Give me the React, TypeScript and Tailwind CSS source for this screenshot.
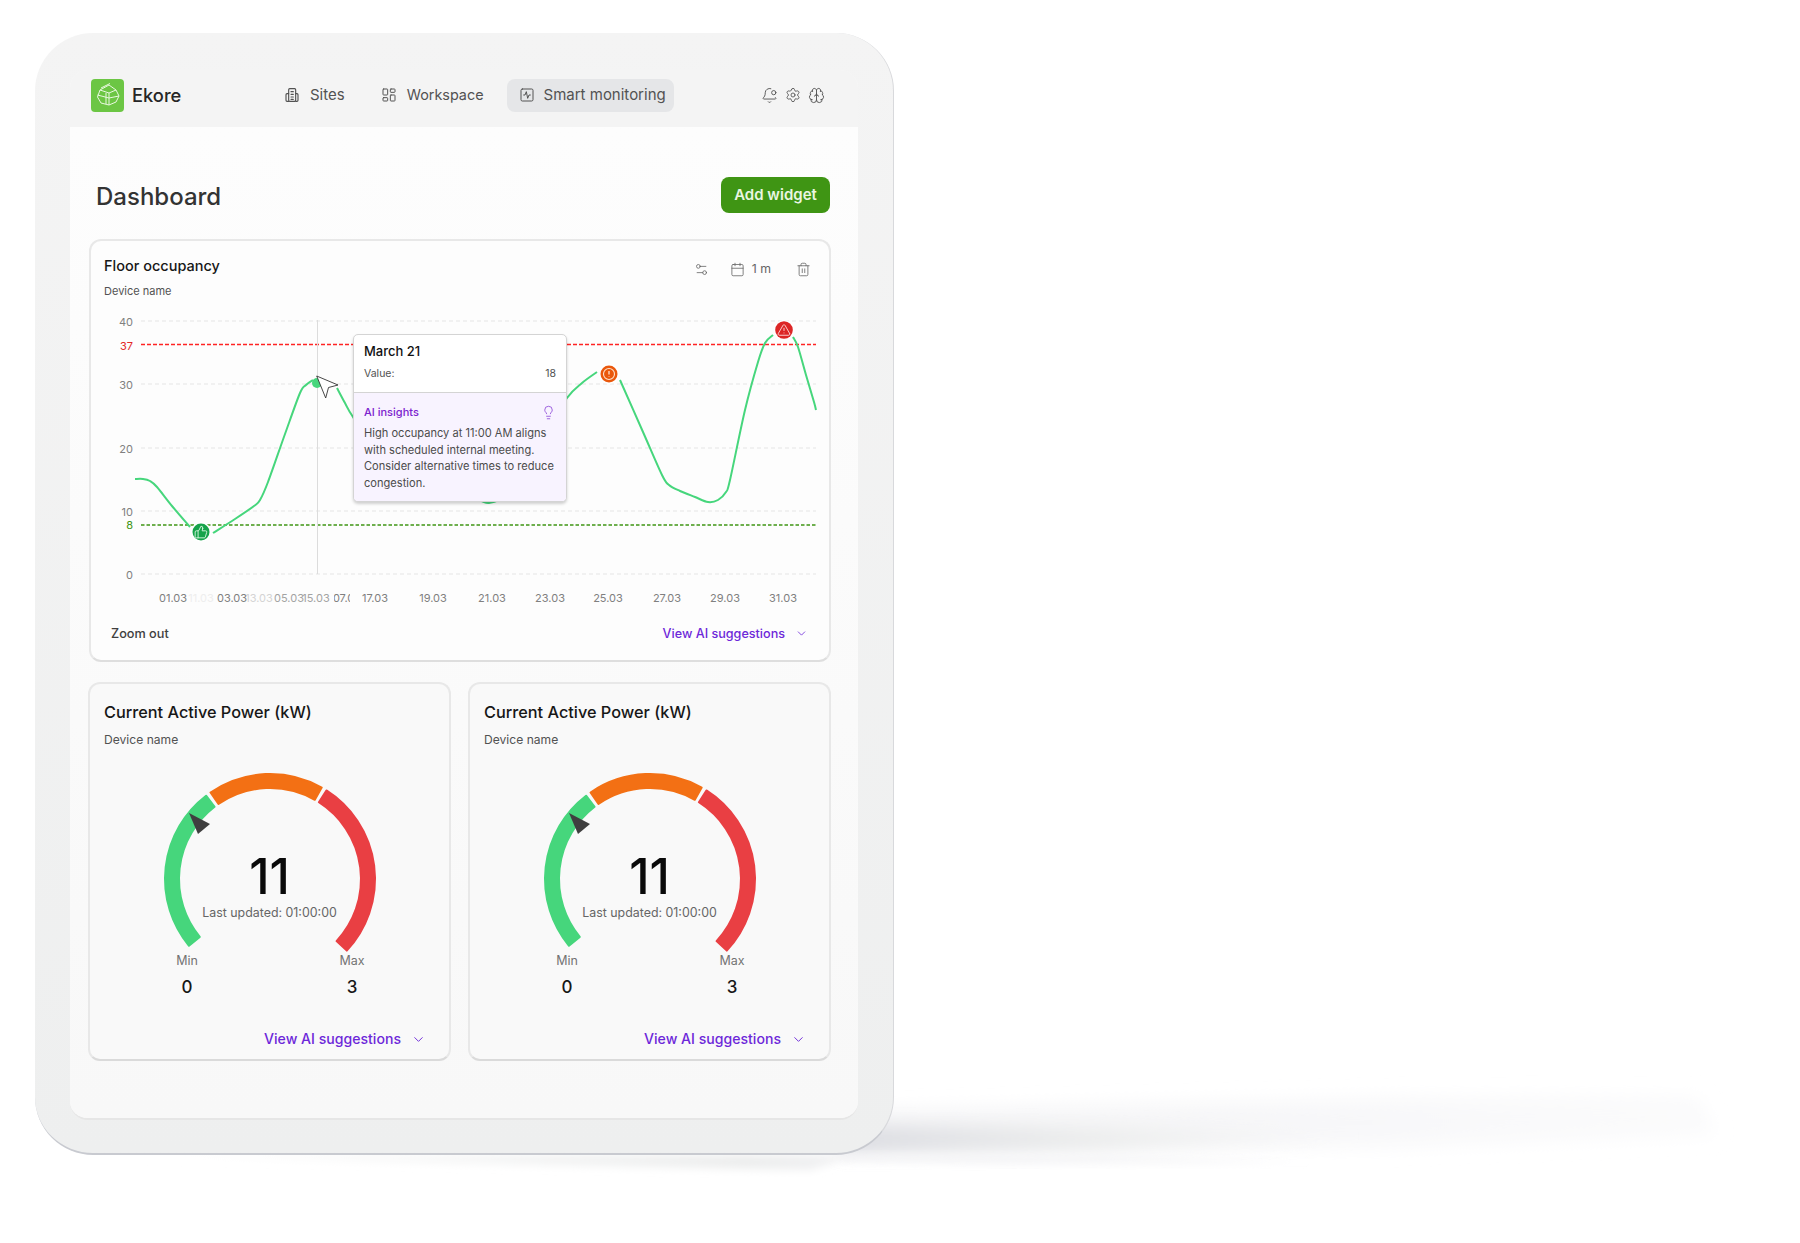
import React from "react";
import { BellDot, Brain, Calendar, ChevronDown, LayoutDashboard, Lightbulb, Settings, Settings2, SquareActivity, ThumbsUp, Trash2, TriangleAlert } from "lucide-react";

const pts: [number, number][][] = [
  [[135, 479], [143, 479], [150, 481], [157, 487], [172, 506], [190, 527]],
  [[213, 533], [235, 519], [254, 506], [260, 500], [268, 482], [285, 434], [300, 393], [306, 385], [313, 380]],
  [[337, 388], [345, 403], [353, 417], [380, 455], [430, 480], [470, 495], [489, 503], [510, 490], [540, 440], [567, 398], [582, 383], [597, 372]],
  [[620, 380], [643, 432], [662, 475], [669, 485], [680, 491], [695, 497], [708, 502], [718, 500], [726, 492], [730, 480], [745, 410], [758, 362], [765, 343], [773, 335]],
  [[793, 337], [798, 347], [806, 375], [814, 402], [816, 410]],
];

function smooth(p: [number, number][]) {
  let d = `M${p[0][0]} ${p[0][1]}`;
  for (let i = 0; i < p.length - 1; i++) {
    const a = p[Math.max(i - 1, 0)], b = p[i], c = p[i + 1], e = p[Math.min(i + 2, p.length - 1)];
    d += ` C${b[0] + (c[0] - a[0]) / 6} ${b[1] + (c[1] - a[1]) / 6} ${c[0] - (e[0] - b[0]) / 6} ${c[1] - (e[1] - b[1]) / 6} ${c[0]} ${c[1]}`;
  }
  return d;
}

function sector(a0: number, a1: number, r0 = 91, r1 = 105) {
  const P = (r: number, a: number) => {
    const t = (a * Math.PI) / 180;
    return `${(r * Math.sin(t)).toFixed(2)} ${(-r * Math.cos(t)).toFixed(2)}`;
  };
  const large = a1 - a0 > 180 ? 1 : 0;
  return `M${P(r1, a0)} A${r1} ${r1} 0 ${large} 1 ${P(r1, a1)} L${P(r0, a1)} A${r0} ${r0} 0 ${large} 0 ${P(r0, a0)} Z`;
}

const ticks: [string, number][] = [["40", 321], ["30", 384], ["20", 448], ["10", 511], ["0", 574]];
const xLabels: [string, number, string][] = [
  ["11.03", 201, "#eeeeee"], ["13.03", 259, "#d4d4d4"], ["15.03", 316, "#a3a3a3"],
  ["01.03", 173, "#808080"], ["03.03", 232, "#808080"], ["05.03", 289, "#a3a3a3"],
  ["17.03", 375, "#808080"], ["19.03", 433, "#808080"], ["21.03", 492, "#808080"], ["23.03", 550, "#808080"],
  ["25.03", 608, "#808080"], ["27.03", 667, "#808080"], ["29.03", 725, "#808080"], ["31.03", 783, "#808080"],
];

function Logo() {
  return (
    <div className="flex h-[33px] w-[33px] items-center justify-center rounded-[4px] bg-[#6cc644]">
      <svg width="26" height="26" viewBox="0 0 26 26" fill="none" stroke="#e9f8df" strokeWidth="1" strokeLinejoin="round">
        <path d="M5 8 L14 3 L21 8 L24 14 L21 20 L14 23 L6 21 L2.500 15 Z" />
        <path d="M5 8 L14 11 L21 8 M14 11 V23 M2.500 13 L14 16 L24 14 M6 6 L15 1.500" />
        <path d="M11 11 V22" />
      </svg>
    </div>
  );
}

function SitesIcon() {
  return (
    <svg width="16" height="16" viewBox="0 0 24 24" fill="none" stroke="currentColor" strokeWidth="1.700" strokeLinejoin="round" strokeLinecap="round">
      <rect x="7" y="2.500" width="10.500" height="19" rx="1.500" />
      <path d="M7 10 H4.500 A1.500 1.500 0 0 0 3 11.500 V20 A1.500 1.500 0 0 0 4.500 21.500 H7" />
      <path d="M17.500 10 H19.500 A1.500 1.500 0 0 1 21 11.500 V20 A1.500 1.500 0 0 1 19.500 21.500 H17.500" />
      <path d="M10.500 7 H14 M10.500 11 H14 M10.500 15 H14 M10.500 18.500 H14" />
    </svg>
  );
}

function Chart() {
  return (
    <div className="relative mt-[11px] h-[300px]">
      <svg className="block" width="737" height="300" viewBox="91 310 737 300" fontFamily="Inter, sans-serif">
        {ticks.map(([t, y]) => (
          <g key={t}>
            <line x1="141" x2="816" y1={y} y2={y} stroke="#e5e5e5" strokeDasharray="4 3" />
            <text x="133" y={y + 5} textAnchor="end" fontSize="11" fill="#808080">{t}</text>
          </g>
        ))}
        <line x1="141" x2="816" y1="344.500" y2="344.500" stroke="#ff2424" strokeWidth="1.300" strokeDasharray="4 2" />
        <text x="133" y="350" textAnchor="end" fontSize="11" fill="#e32626">37</text>
        <line x1="141" x2="816" y1="525" y2="525" stroke="#3f9514" strokeWidth="1.300" strokeDasharray="3.500 2" />
        <text x="133" y="529" textAnchor="end" fontSize="11" fill="#3f9514">8</text>
        <line x1="317.500" x2="317.500" y1="320" y2="574" stroke="#dcdcdc" />
        {pts.map((p, i) => (
          <path key={i} d={smooth(p)} fill="none" stroke="#46d67c" strokeWidth="2" />
        ))}
        {xLabels.map(([t, x, c]) => (
          <text key={t} x={x} y="602" textAnchor="middle" fontSize="11" fill={c}>{t}</text>
        ))}
        <clipPath id="c07"><rect x="334" y="590" width="16" height="16" /></clipPath>
        <text x="347" y="602" textAnchor="middle" fontSize="11" fill="#808080" clipPath="url(#c07)">07.03</text>
        <circle cx="317" cy="383" r="5" fill="#46d67c" />
        <path d="M316.700 376 L338 385 L328.500 387.500 L325.700 398 Z" fill="#fff" stroke="#333" strokeWidth="0.900" strokeLinejoin="round" />
        <g>
          <circle cx="201" cy="532" r="10" fill="#fff" />
          <circle cx="201" cy="532" r="8.500" fill="#16a34a" />
          <ThumbsUp x={194} y={525} width={14} height={14} color="#d6f5df" strokeWidth={1.600} />
        </g>
        <g>
          <circle cx="609" cy="374" r="10" fill="#fff" />
          <circle cx="609" cy="374" r="8.500" fill="#ea580c" />
          <circle cx="609" cy="374" r="5.500" fill="none" stroke="#fde3d0" strokeWidth="1.100" />
          <path d="M609 371 V374.500 M609 376.500 V377" stroke="#fde3d0" strokeWidth="1.300" />
        </g>
        <g>
          <circle cx="784" cy="330" r="10" fill="#fff" />
          <circle cx="784" cy="330" r="8.800" fill="#dc2626" />
          <TriangleAlert x={777} y={323} width={14} height={14} color="#fde2e2" strokeWidth={1.500} />
        </g>
      </svg>
      <div className="absolute left-[262px] top-[24px] w-[214px] overflow-hidden rounded-[5px] border border-[#d4d4d4] bg-white shadow-[0_2px_3px_rgba(0,0,0,0.18)]">
        <div className="h-[58px] border-b border-[#d4d4d4] px-[10px] pt-[7px]">
          <div className="text-[13px] leading-[18px] font-medium text-[#111]">March 21</div>
          <div className="mt-[7px] flex justify-between text-[10.5px] leading-[14px] text-[#525252]">
            <span>Value:</span>
            <span>18</span>
          </div>
        </div>
        <div className="h-[108px] bg-[#f8f3ff] px-[10px] pt-[11px]">
          <div className="flex items-center justify-between">
            <span className="text-[11px] leading-[16px] font-medium text-[#7c22ce]">AI insights</span>
            <Lightbulb className="h-[15px] w-[15px] text-[#8b45d8]" strokeWidth={1.300} />
          </div>
          <p className="mt-[5px] text-[11.100px] leading-[16.600px] text-[#4b4b4b]">
            High occupancy at 11:00 AM aligns with scheduled internal meeting. Consider alternative times to reduce congestion.
          </p>
        </div>
      </div>
    </div>
  );
}

function GaugeCard() {
  return (
    <div className="flex h-[379px] flex-col rounded-[12px] border-2 border-[#e8e8e8] border-b-[#dadada] bg-[#f9f9f9] pt-[16px]">
      <div className="px-[14px] text-[16.300px] leading-[24px] font-medium text-[#171717]">Current Active Power (kW)</div>
      <div className="mt-[7px] px-[14px] text-[12.100px] leading-[18px] text-[#525252]">Device name</div>
      <div className="relative mx-auto mt-[17px] h-[187px] w-[240px]">
        <svg className="block" width="240" height="187" viewBox="-120 -113 240 187">
          <path d={sector(-129.500, -37.500)} fill="#46d67c" stroke="#46d67c" strokeWidth="2" strokeLinejoin="round" />
          <path d={sector(-34.500, 29.500)} fill="#f37014" stroke="#f37014" strokeWidth="2" strokeLinejoin="round" />
          <path d={sector(32.500, 133)} fill="#e93f43" stroke="#e93f43" strokeWidth="2" strokeLinejoin="round" />
          <path d="M-81 -66 L-60 -55 L-72 -45 Z" fill="#3f3f3f" />
        </svg>
        <div className="absolute inset-x-0 top-[87px] flex flex-col items-center">
          <div className="text-[49px] leading-[48px] font-medium text-[#0a0a0a]">11</div>
          <div className="mt-[3px] text-[12.400px] leading-[18px] text-[#666]">Last updated: 01:00:00</div>
        </div>
      </div>
      <div className="mx-auto flex w-[205px] justify-between">
        {[["Min", "0"], ["Max", "3"]].map(([a, b]) => (
          <div key={a} className="flex w-[40px] flex-col items-center">
            <div className="text-[12.500px] leading-[16px] text-[#737373]">{a}</div>
            <div className="mt-[6px] text-[17px] leading-[24px] font-medium text-[#171717]">{b}</div>
          </div>
        ))}
      </div>
      <div className="mt-[30px] flex items-center justify-end gap-[10px] pr-[23px] text-[14.100px] leading-[20px] font-medium text-[#6d28d9]">
        <span>View AI suggestions</span>
        <ChevronDown className="h-[15px] w-[15px]" strokeWidth={1.500} />
      </div>
    </div>
  );
}

export default function App() {
  return (
    <div className="relative h-[1243px] w-[1800px] overflow-hidden bg-white pl-[35px] pt-[33px] font-['Inter',sans-serif]">
      <svg className="absolute left-0 top-0" width="1800" height="1243" viewBox="0 0 1800 1243">
        <defs>
          <linearGradient id="sh0" x1="0" x2="1" y1="0" y2="0">
            <stop offset="0" stopColor="#f3f3f5" />
            <stop offset="1" stopColor="#fbfbfc" />
          </linearGradient>
          <linearGradient id="sh1" x1="0" x2="1" y1="0" y2="0">
            <stop offset="0" stopColor="#dcdde2" />
            <stop offset="0.5" stopColor="#eceded" />
            <stop offset="1" stopColor="#f7f7f8" />
          </linearGradient>
          <linearGradient id="sh2" x1="0" x2="1" y1="0" y2="0">
            <stop offset="0" stopColor="#ffffff" />
            <stop offset="0.85" stopColor="#eceded" />
            <stop offset="1" stopColor="#f2f2f4" />
          </linearGradient>
          <filter id="bl0" x="-10%" y="-50%" width="120%" height="200%"><feGaussianBlur stdDeviation="9" /></filter>
          <filter id="bl" x="-10%" y="-80%" width="120%" height="260%"><feGaussianBlur stdDeviation="8" /></filter>
          <filter id="bl2" x="-10%" y="-50%" width="120%" height="200%"><feGaussianBlur stdDeviation="4" /></filter>
        </defs>
        <path d="M840 1112 L1400 1098 L1700 1096 L1715 1135 L1400 1146 L840 1150 Z" fill="url(#sh0)" filter="url(#bl0)" />
        <path d="M840 1126 L1100 1128 L1350 1136 L1100 1150 L840 1153 Z" fill="url(#sh1)" filter="url(#bl)" />
        <path d="M100 1155 L860 1155 L810 1170 L500 1164 Z" fill="url(#sh2)" filter="url(#bl2)" />
        <path d="M850 1155 L1100 1156 L1310 1162 L1000 1164 L840 1160 Z" fill="#f4f4f6" filter="url(#bl2)" />
      </svg>
      <div className="relative h-[1122px] w-[859px] rounded-[58px] border-r border-b-2 border-r-[#d8d9dc] border-b-[#c8cad0] bg-gradient-to-b from-[#f4f4f4] to-[#eeefef] pb-[33px] pl-[35px] pr-[35px] pt-[37px]">
        <div className="flex h-full flex-col overflow-hidden rounded-[18px] border-b-2 border-b-[#e6e6e6] bg-[#f9f9f9]">
          <header className="flex h-[57px] shrink-0 items-center bg-[#f4f4f4] pb-[7px] pl-[21px] pr-[31px]">
            <Logo />
            <span className="ml-[8px] w-[92px] pt-[2px] text-[18.300px] font-medium text-[#262626]">Ekore</span>
            <div className="ml-[48px] flex items-center">
              <div className="flex h-[33px] items-center gap-[10px] px-[12px] text-[15px] text-[#525252]">
                <SitesIcon />
                <span>Sites</span>
              </div>
              <div className="w-[12px]" />
              <div className="flex h-[33px] items-center gap-[10px] px-[12px] text-[14.400px] text-[#525252]">
                <LayoutDashboard className="h-[16px] w-[16px]" strokeWidth={1.500} />
                <span>Workspace</span>
              </div>
              <div className="w-[11px]" />
              <div className="flex h-[33px] items-center gap-[9px] rounded-[8px] bg-[#e5e6e8] pl-[12px] pr-[8px] text-[15px] text-[#525252]">
                <SquareActivity className="h-[16px] w-[16px]" strokeWidth={1.500} />
                <span>Smart monitoring</span>
              </div>
            </div>
            <div className="ml-auto -translate-x-[2px] flex items-center gap-[7px] text-[#525252]">
              <BellDot className="h-[17px] w-[17px]" strokeWidth={1.300} />
              <Settings className="h-[16px] w-[16px]" strokeWidth={1.300} />
              <Brain className="h-[17px] w-[17px]" strokeWidth={1.300} />
            </div>
          </header>
          <main className="flex-1 bg-gradient-to-b from-[#fdfdfd] to-[#f8f8f8] pl-[19px] pr-[27px] pt-[50px]">
            <div className="flex h-[36px] items-center justify-between pl-[7px] pr-[1px]">
              <h1 className="pt-[3px] text-[24px] font-[450] text-[#333333]">Dashboard</h1>
              <button className="flex h-[36px] w-[109px] items-center justify-center rounded-[8px] bg-[#3f9514] text-[15px] font-semibold text-[#eaf6e2]">Add widget</button>
            </div>
            <section className="mt-[26px] flex h-[423px] flex-col rounded-[12px] border-2 border-[#e8e8e8] border-b-[#dedede] bg-[#fdfdfd] pt-[15px]">
              <div className="flex h-[20px] items-center justify-between pl-[13px] pr-[18px]">
                <span className="text-[14.500px] font-medium text-[#171717]">Floor occupancy</span>
                <div className="mt-[7px] flex items-center text-[#666]">
                  <Settings2 className="h-[15px] w-[15px]" strokeWidth={1.300} />
                  <Calendar className="ml-[21px] h-[15px] w-[15px]" strokeWidth={1.300} />
                  <span className="ml-[7px] text-[12.300px]">1 m</span>
                  <Trash2 className="ml-[25px] h-[15px] w-[15px]" strokeWidth={1.300} />
                </div>
              </div>
              <div className="mt-[7px] pl-[13px] text-[11px] leading-[16px] text-[#525252]">Device name</div>
              <Chart />
              <div className="mt-[14px] flex h-[20px] items-center justify-between pl-[20px] pr-[21px]">
                <span className="text-[12.700px] font-medium text-[#404040]">Zoom out</span>
                <span className="flex items-center gap-[10px] text-[12.600px] font-medium text-[#6d28d9]">
                  View AI suggestions
                  <ChevronDown className="h-[13px] w-[13px]" strokeWidth={1.500} />
                </span>
              </div>
            </section>
            <div className="mt-[20px] -ml-[1px] grid grid-cols-[363px_363px] gap-[17px]">
              <GaugeCard />
              <GaugeCard />
            </div>
          </main>
        </div>
      </div>
    </div>
  );
}
